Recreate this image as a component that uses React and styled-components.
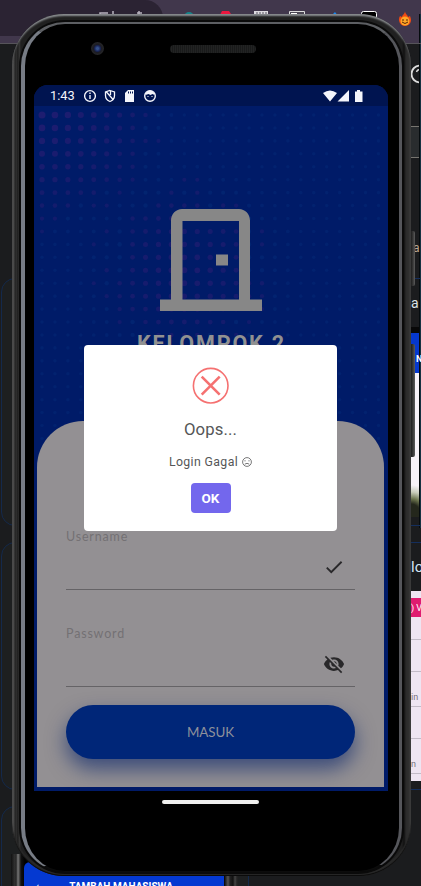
import React from "react";
import styled, { createGlobalStyle } from "styled-components";

const Global = createGlobalStyle`
  * { box-sizing: border-box; }
  body { margin: 0; background: #1b1c1e; font-family: Roboto, sans-serif; }
`;

/* Desktop and phone share one grid cell; the phone is painted on top. */
const Page = styled.main`
  display: grid;
  grid-template: 886px / 421px;
  overflow: hidden;
  background: #1b1c1e;
`;

/* ---- desktop behind the emulator ---- */
const Desktop = styled.div`
  grid-area: 1 / 1;
  display: grid;
  grid-template: 44px 842px / 421px;
  overflow: hidden;
`;
const Toolbar = styled.header`
  display: grid;
  grid-template: 43px / 421px;
  background: #41374c;
  border-bottom: 1px solid #56545a;
`;
const AddressBar = styled.div`
  grid-area: 1 / 1;
  width: 163px;
  height: 36px;
  background: #2b2333;
  border-radius: 0 18px 18px 0;
`;
const TabArt = styled.svg`
  grid-area: 1 / 1;
`;
const DesktopBody = styled.div`
  display: flex;
  justify-content: space-between;
`;
const CardColumn = styled.div`
  display: flex;
  flex-direction: column;
  gap: 16px;
  width: 249px;
  padding: 234px 0 0 1px;
`;
const Card = styled.div`
  display: flex;
  height: ${(p) => p.$h};
  flex: none;
  border: 1px solid #14294b;
  border-radius: 14px;
  background: #1d1f20;
`;
const SmallPhone = styled.div`
  display: flex;
  width: 227px;
  height: 40px;
  margin: 47px 0 0 9px;
  padding: 8px 14px 0 13px;
  background: linear-gradient(90deg, #111, #333 4px, #222 5px, #777 7px, #555 8px, #111 10px, #000 14px, #000 213px, #555 217px, #222 219px, #111 222px, #444 224px, #222 226px);
`;
const SmallScreen = styled.div`
  display: flex;
  gap: 30px;
  width: 200px;
  height: 32px;
  padding: 17px 0 0 12px;
  border-radius: 6px 0 0 0;
  background: #0439d1;
  color: #fff;
  font: 700 10px/15px Roboto, sans-serif;
  white-space: nowrap;
`;
const Strip = styled.div`
  width: 10px;
  flex: none;
`;
const WindowEdge = styled.div`
  display: flex;
  flex-direction: column;
  height: 484px;
  border-right: 1px solid #163342;
  box-shadow: inset -1px 0 #050b0e;
`;
const HelpIcon = styled.svg`
  display: block;
  flex: none;
  margin: 20px 0 42px;
`;
const Entry = styled.div`
  height: 32px;
  flex: none;
  margin-right: 1px;
  background: #292c2e;
  border: solid #777570;
  border-width: 1px 0;
`;
const SideText = styled.div`
  flex: none;
  padding-left: ${(p) => p.$indent || "0"};
  margin: ${(p) => p.$margin};
  color: ${(p) => p.$color || "#d2e5f5"};
  font: ${(p) => p.$size || "14px"}/18px Roboto, sans-serif;
`;
const Rule = styled.div`
  height: 1px;
  flex: none;
  margin-top: ${(p) => p.$gap || "0"};
  background: #142e5c;
`;
const Banner = styled.div`
  height: 46px;
  flex: none;
  margin-right: 1px;
  padding-left: 5px;
  border-top: 6px solid #080808;
  background: #0638ce;
  color: #fff;
  font: 700 9px/53px Roboto, sans-serif;
`;
const Photo = styled.div`
  height: 144px;
  flex: none;
  margin-right: 1px;
  background: radial-gradient(circle at 0 140px, #24271c 0 9px, #69714c 14px, #c9ccbc 21px, #f7f2f8 28px);
`;
const FormPeek = styled.div`
  display: grid;
  grid-template-rows: 7px 19px 23px 32px 35px 32px 35px 7px;
  background: #eee5f2;
`;
const PeekRow = styled.div`
  display: flex;
  align-items: flex-end;
  padding-bottom: 3px;
  border-bottom: ${(p) => (p.$plain ? "0" : "1px solid #c2bbc7")};
  background: ${(p) => p.$bg || "transparent"};
  color: ${(p) => p.$color || "#77717d"};
  font: 9px/12px Roboto, sans-serif;
  white-space: nowrap;
`;

/* ---- phone ---- */
const Phone = styled.section`
  grid-area: 1 / 1;
  position: relative;
  width: 399px;
  height: 862px;
  margin: 14px 0 0 12px;
  padding: 8px 9px 4px;
  border-radius: 52px;
  box-shadow: inset 0 3px 2px -1px #8b8e91, inset 0 -1px 1px #080808, inset 0 -4px 1px #2a2a2a;
  background: linear-gradient(90deg, #585858 0, #454545 2px, #242424 3px, #303030 5px, #151515 6px, #3c3c3c 7px, #202020 9px, #202020 390px, #111 392px, #2a2a2a 394px, #303030 397px, #444 399px);
`;
const SideKey = styled.i`
  position: absolute;
  right: -4px;
  top: ${(p) => p.$top};
  width: 4px;
  height: ${(p) => p.$height};
  border-radius: 0 2px 2px 0;
  background: linear-gradient(90deg, #1e1e1e, #383838 2px, #5c5c5c);
`;
const Face = styled.div`
  height: 850px;
  display: grid;
  grid-template-rows: 61px 706px 80px;
  border: solid;
  border-width: 2px 3px 1px 4px;
  border-color: #5d5f63 #55565b #0c0c0c #777c85;
  border-radius: 44px;
  background: #000;
  box-shadow: 0 0 0 2px #0a0a0a;
`;
const TopBezel = styled.div`
  display: flex;
  padding-top: 18px;
`;
const Camera = styled.div`
  width: 13px;
  height: 13px;
  margin-left: 66px;
  border-radius: 50%;
  background: radial-gradient(circle, #35508a 0 1px, #182353 3px, #1b1c24 4px, #252527 6px);
`;
const Speaker = styled.div`
  width: 86px;
  height: 8px;
  margin: 3px 0 0 66px;
  border-radius: 4px;
  background: repeating-linear-gradient(90deg, #191a1a 0 1px, #222323 1px 2px);
`;
const Screen = styled.div`
  position: relative;
  width: 354px;
  height: 706px;
  margin-left: 9px;
  display: flex;
  flex-direction: column;
  overflow: hidden;
  border-radius: 14px 14px 0 0;
  background: #001b68;
`;
const DotLayer = styled.svg`
  position: absolute;
  left: 0;
  top: 0;
`;
const StatusBar = styled.div`
  position: relative;
  display: flex;
  align-items: center;
  height: 21px;
  flex: none;
  padding: 1px 24px 0 16px;
  color: #f4f5fb;
  background: #001450;
  font: 400 12.8px/20px Roboto, sans-serif;
`;
const StatusIcons = styled.svg`
  margin-left: ${(p) => p.$gap};
`;
const Hero = styled.div`
  position: relative;
  flex: none;
  height: 315px;
  display: flex;
  flex-direction: column;
  align-items: center;
  padding-top: 103px;
  color: #878787;
`;
const Title = styled.h1`
  margin: 20px 0 0 1px;
  font: 700 21.5px/25px Roboto, sans-serif;
  letter-spacing: 1.87px;
  color: #919191;
  white-space: nowrap;
`;
const Sheet = styled.section`
  position: relative;
  display: flex;
  flex-direction: column;
  width: 347px;
  height: 366px;
  margin-left: 3px;
  padding: 107px 29px 0;
  border-radius: 46px 46px 0 0;
  background: #939093;
`;
const Fields = styled.div`
  display: grid;
  grid-template-rows: 62px 62px;
  gap: 35px;
  margin-bottom: 18px;
`;
const Field = styled.div`
  border-bottom: 1px solid #656366;
  color: #737174;
`;
const Label = styled.label`
  display: block;
  font: 12.5px/18px Lato, sans-serif;
  letter-spacing: 0.82px;
`;
const FieldIcon = styled.svg`
  display: block;
  margin: 10px 10px 0 auto;
  color: #29282a;
`;
const Submit = styled.button`
  height: 54px;
  padding: 0;
  border: 0;
  border-radius: 27px;
  background: #002678;
  color: #8e919b;
  font: 13.4px/55px Lato, sans-serif;
  letter-spacing: -0.1px;
  box-shadow: 0 10px 20px rgba(0, 30, 105, 0.6);
`;
const HomeBar = styled.div`
  width: 97px;
  height: 4px;
  margin: 9px 0 0 137px;
  border-radius: 2px;
  background: #f0f0ef;
`;
const Dialog = styled.div`
  position: absolute;
  left: 50px;
  top: 260px;
  width: 253px;
  height: 186px;
  display: flex;
  flex-direction: column;
  align-items: center;
  padding-top: 22px;
  border-radius: 4px;
  background: #fff;
  color: #555657;
`;
const DialogTitle = styled.h2`
  margin: 14px 0 0;
  font: 400 16.7px/22px Roboto, sans-serif;
  letter-spacing: 0.12px;
`;
const Message = styled.p`
  display: flex;
  align-items: center;
  gap: 4px;
  margin: 12px 0 0;
  font: 400 12.3px/18px Roboto, sans-serif;
  letter-spacing: 0.38px;
`;
const OkButton = styled.button`
  width: 40px;
  height: 30px;
  margin-top: 12px;
  padding: 0;
  border: 0;
  border-radius: 4px;
  background: #7367ed;
  color: #fff;
  font: 700 13.5px/30px Roboto, sans-serif;
`;

const dots = [];
for (let r = 0; r < 27; r++) {
  for (let c = 0; c < 27; c++) {
    const corner = Math.max(0, 1 - Math.hypot(c, r * 1.1) / 11);
    const middle = Math.max(0, 1 - Math.hypot(c - 11, r - 12) / 9) * 0.7;
    const k = Math.max(corner, middle);
    const noise = ((c * 7 + r * 11 + c * r * 3) % 10) / 10;
    const purple = k + noise * 0.3 > 0.36;
    dots.push({ x: 8 + c * 12.94, y: 30 + r * 12.94, r: 1.8 + k * 1.7, fill: purple ? "#45207c" : "#083c88", o: 0.22 + k * 0.22 });
  }
}

function Backdrop() {
  return (
    <Desktop>
      <Toolbar>
        <AddressBar />
        <TabArt width="421" height="43">
          <path d="M100 17v-4h8M113 11v6M120 14v3M139 11v6M137 13h5" stroke="#b9b4c0" strokeWidth="1.5" fill="none" />
          <circle cx="189" cy="17" r="5" fill="#16848a" />
          <path d="m219 17 3-6h7l4 6z" fill="#ec173f" />
          <path d="M254 11h14v7h-14z" fill="#dedbe0" />
          <path d="M257 12v3m3-3v3m3-3v3m3-3v3" stroke="#57525e" />
          <path d="M289.500 11.500h15v7h-15z" fill="#4b4653" stroke="#ddd" />
          <path d="M291 13h6v4h-6z" fill="#fff" />
          <path d="m329 16 4-2 2-2 3 4z" fill="#168af0" />
          <rect x="361.500" y="11.500" width="15" height="9" rx="2" fill="#000" stroke="#fff" />
          <path d="M405 11c0 3 3 4 3 6l2-1c3 6-1 10-5 10s-8-5-5-10l2 1c0-2 3-3 3-6z" fill="#f04a12" />
          <circle cx="405" cy="21" r="4.500" fill="#ffa726" />
          <path d="M403 19v2m4-2v2m-5 1q3 3 6 0" stroke="#57250b" fill="none" />
          <path d="M419.500 14v29" stroke="#050b0e" />
          <path d="M420.500 14v29" stroke="#163342" />
        </TabArt>
      </Toolbar>
      <DesktopBody>
        <CardColumn>
          <Card $h="248px" />
          <Card $h="248px" />
          <Card $h="120px">
            <SmallPhone><SmallScreen><span>‹</span><span>TAMBAH MAHASISWA</span></SmallScreen></SmallPhone>
          </Card>
        </CardColumn>
        <Strip>
          <WindowEdge>
            <HelpIcon width="8" height="20" fill="none" stroke="#ddd">
              <circle cx="9" cy="10" r="8.500" strokeWidth="1.800" />
              <path d="M5.500 8q1-3 4-2" strokeWidth="1.500" />
            </HelpIcon>
            <Entry />
            <SideText $margin="81px 0 21px" $indent="2px" $size="12px" $color="#b9a590">a</SideText>
            <Rule />
            <SideText $margin="15px 0" $color="#dce2e7">a</SideText>
            <Banner>N</Banner>
            <Photo />
            <Rule $gap="8px" />
          </WindowEdge>
          <Rule $gap="14px" />
          <SideText $margin="15px 0" $size="15px">lo</SideText>
          <FormPeek>
            <PeekRow $plain />
            <PeekRow $plain $bg="#df1b70" $color="#fff">) V</PeekRow>
            <PeekRow />
            <PeekRow />
            <PeekRow>in</PeekRow>
            <PeekRow />
            <PeekRow>n</PeekRow>
            <PeekRow $plain />
          </FormPeek>
          <Rule $gap="8px" />
        </Strip>
      </DesktopBody>
    </Desktop>
  );
}

export default function App() {
  return (
    <>
      <Global />
      <Page>
        <Backdrop />
        <Phone>
          <SideKey $top="217px" $height="55px" />
          <SideKey $top="330px" $height="113px" />
          <Face>
            <TopBezel><Camera /><Speaker /></TopBezel>
            <Screen>
              <DotLayer width="354" height="706">
                {dots.map((d, i) => <circle key={i} cx={d.x} cy={d.y} r={d.r} fill={d.fill} opacity={d.o} />)}
              </DotLayer>
              <StatusBar>
                1:43
                <StatusIcons $gap="8px" width="73" height="14" viewBox="0 0 73 14" fill="none">
                  <circle cx="7" cy="7" r="5.400" stroke="currentColor" strokeWidth="1.400" />
                  <path d="M7 6v4M7 3.500v1.400" stroke="currentColor" strokeWidth="1.400" />
                  <path d="m27 1.500 4.500 1.500v3.500c0 3-1.800 5-4.500 6-2.700-1-4.500-3-4.500-6V3zM23.500 3l7 8M27.500 2v4" stroke="currentColor" strokeWidth="1.300" />
                  <path d="M45 1h6v12h-9V4z" fill="currentColor" />
                  <path d="M45.500 2.500v2m2-2v2m2-2v2" stroke="#001450" />
                  <circle cx="67" cy="7" r="5.300" stroke="currentColor" strokeWidth="1.400" />
                  <path d="M62.500 6c0-6 9-6 9 0l-2-1-2 1-2-1z" fill="currentColor" />
                  <path d="M64.500 7.500h1m3 0h1" stroke="currentColor" />
                </StatusIcons>
                <StatusIcons $gap="auto" width="41" height="14" viewBox="0 0 41 14" fill="currentColor">
                  <path d="M0 4q7-5 14 0L7 12.500zM26 1v11.500H14.500zM32 2.500h2V1h3v1.500h2.500v10.500H32z" />
                </StatusIcons>
              </StatusBar>
              <Hero>
                <svg width="102" height="102" viewBox="0 0 102 102" fill="currentColor">
                  <path fillRule="evenodd" d="M0 90.500h11V11.500C11 5 16 0 22 0h57c6 0 11 5 11 11.500v79h12V102H0zM22.500 12v78.500H79V12z" />
                  <path d="M56 45.500h12v11H56z" />
                </svg>
                <Title>KELOMPOK 2</Title>
              </Hero>
              <Sheet>
                <Fields>
                  <Field>
                    <Label>Username</Label>
                    <FieldIcon width="22" height="22" viewBox="0 0 24 24" fill="currentColor"><path d="m9 16.170-4.170-4.170-1.420 1.410L9 19 21 7l-1.410-1.410z" /></FieldIcon>
                  </Field>
                  <Field>
                    <Label>Password</Label>
                    <FieldIcon width="22" height="22" viewBox="0 0 24 24" fill="currentColor"><path d="M12 7c2.760 0 5 2.240 5 5 0 .65-.13 1.260-.36 1.830l2.920 2.920c1.510-1.260 2.700-2.890 3.430-4.750-1.730-4.390-6-7.500-11-7.500-1.400 0-2.740.25-3.980.7l2.160 2.160C10.740 7.130 11.350 7 12 7zM2 4.270l2.280 2.280.46.46C3.080 8.300 1.780 10.020 1 12c1.730 4.390 6 7.500 11 7.500 1.550 0 3.030-.3 4.380-.84l.42.42L19.730 22 21 20.730 3.270 3 2 4.270zM7.530 9.800l1.550 1.550c-.05.21-.08.43-.08.65 0 1.660 1.340 3 3 3 .22 0 .44-.03.65-.08l1.550 1.550c-.67.33-1.410.53-2.200.53-2.760 0-5-2.240-5-5 0-.79.2-1.530.53-2.200zm4.310-.78 3.150 3.150.02-.16c0-1.660-1.340-3-3-3l-.17.01z" /></FieldIcon>
                  </Field>
                </Fields>
                <Submit>MASUK</Submit>
              </Sheet>
              <Dialog role="dialog">
                <svg width="38" height="38" viewBox="0 0 38 38" fill="none" stroke="#f57171">
                  <circle cx="18.700" cy="18.700" r="17.300" strokeWidth="1.600" />
                  <path d="m9.700 9.700 18 18m0-18-18 18" strokeWidth="2.600" />
                </svg>
                <DialogTitle>Oops...</DialogTitle>
                <Message>
                  Login Gagal
                  <svg width="10" height="10" viewBox="0 0 10 10" fill="none" stroke="currentColor" strokeWidth=".8">
                    <circle cx="5" cy="5" r="4.400" /><path d="M3 3.200v1.200m4-1.200v1.200M2.700 7.200q2.300-1.800 4.600 0" />
                  </svg>
                </Message>
                <OkButton>OK</OkButton>
              </Dialog>
            </Screen>
            <HomeBar />
          </Face>
        </Phone>
      </Page>
    </>
  );
}
